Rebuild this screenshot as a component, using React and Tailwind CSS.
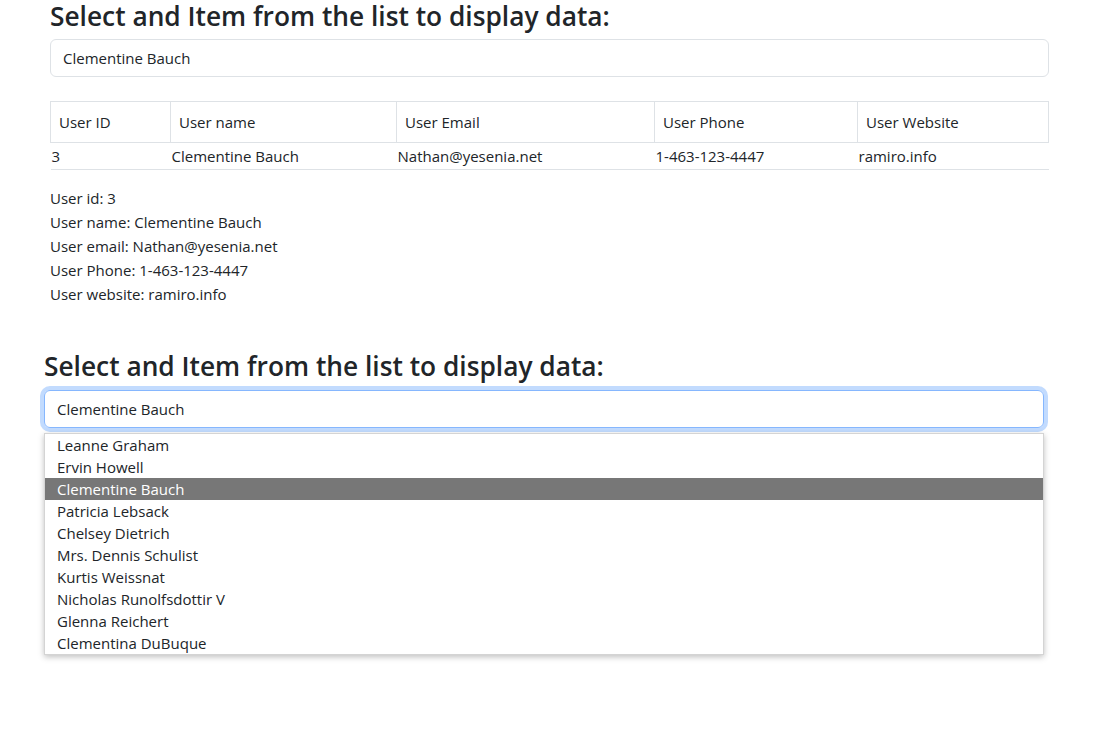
import React from 'react';

const users = [
  'Leanne Graham',
  'Ervin Howell',
  'Clementine Bauch',
  'Patricia Lebsack',
  'Chelsey Dietrich',
  'Mrs. Dennis Schulist',
  'Kurtis Weissnat',
  'Nicholas Runolfsdottir V',
  'Glenna Reichert',
  'Clementina DuBuque',
];

const selected = {
  id: 3,
  name: 'Clementine Bauch',
  email: 'Nathan@yesenia.net',
  phone: '1-463-123-4447',
  website: 'ramiro.info',
};

const App = () => {
  return (
    <div className="bg-white min-h-[753px] text-[#212529] font-['Open_Sans',sans-serif] text-[15px]">
      {/* === First section: select + table + details === */}
      <section className="ml-[50px] w-[999px]">
        <h3 className="text-[26.3px] leading-[33px] font-semibold mb-[6px]">
          Select and Item from the list to display data:
        </h3>
        <div className="h-[38px] border border-[#dee2e6] rounded-[6px] px-[12px] flex items-center">
          Clementine Bauch
        </div>

        <table className="mt-[24px] w-full border-collapse">
          <thead>
            <tr className="h-[41px]">
              <th className="w-[120px] border border-[#dee2e6] px-[8px] text-left font-normal">User ID</th>
              <th className="w-[226px] border border-[#dee2e6] px-[8px] text-left font-normal">User name</th>
              <th className="w-[258px] border border-[#dee2e6] px-[8px] text-left font-normal">User Email</th>
              <th className="w-[203px] border border-[#dee2e6] px-[8px] text-left font-normal">User Phone</th>
              <th className="border border-[#dee2e6] px-[8px] text-left font-normal">User Website</th>
            </tr>
          </thead>
          <tbody>
            <tr className="h-[27px] border-b border-[#dee2e6]">
              <td className="px-[1px]">{selected.id}</td>
              <td className="px-[1px]">{selected.name}</td>
              <td className="px-[1px]">{selected.email}</td>
              <td className="px-[1px]">{selected.phone}</td>
              <td className="px-[1px]">{selected.website}</td>
            </tr>
          </tbody>
        </table>

        <div className="mt-[16px] leading-[24px]">
          <div>User id: {selected.id}</div>
          <div>User name: {selected.name}</div>
          <div>User email: {selected.email}</div>
          <div>User Phone: {selected.phone}</div>
          <div>User website: {selected.website}</div>
        </div>
      </section>

      {/* === Second section: open dropdown === */}
      <section className="ml-[44px] w-[1000px] mt-[44px]">
        <h3 className="text-[26.3px] leading-[33px] font-semibold mb-[7px]">
          Select and Item from the list to display data:
        </h3>
        <div className="relative">
          <div className="h-[38px] border border-[#86b7fe] rounded-[6px] px-[12px] flex items-center shadow-[0_0_0_4px_rgba(13,110,253,0.25)]">
            Clementine Bauch
          </div>
          <ul className="absolute left-0 right-0 top-[43px] bg-white border border-[#d4d4d4] shadow-[0_2px_6px_rgba(0,0,0,0.25)]">
            {users.map((u) => (
              <li
                key={u}
                className={`h-[22px] leading-[22px] px-[12px] ${
                  u === selected.name ? 'bg-[#777777] text-white' : ''
                }`}
              >
                {u}
              </li>
            ))}
          </ul>
        </div>
      </section>
    </div>
  );
};

export default App;
